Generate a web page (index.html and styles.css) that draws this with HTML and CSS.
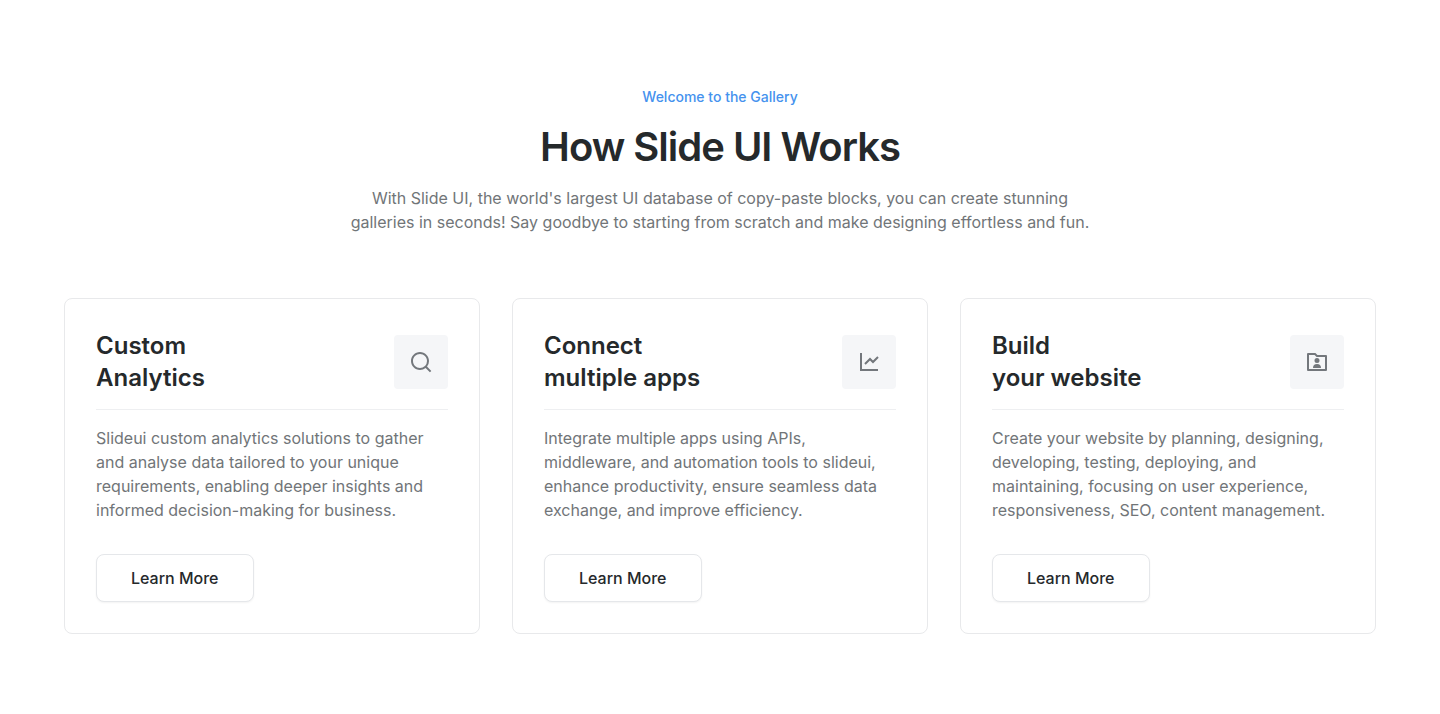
FILE: index.html
```
<!DOCTYPE html>
<html lang="en">
<head>
<meta charset="utf-8">
<meta name="viewport" content="width=device-width, initial-scale=1">
<title>How Slide UI Works</title>
<link rel="stylesheet" href="styles.css">
</head>
<body>
<main class="section">
  <header class="intro">
    <p class="eyebrow">Welcome to the Gallery</p>
    <h1 class="title">How Slide UI Works</h1>
    <p class="lead">With Slide UI, the world's largest UI database of copy-paste blocks, you can create stunning galleries in seconds! Say goodbye to starting from scratch and make designing effortless and fun.</p>
  </header>
  <div class="cards">
    <article class="card">
      <div class="card-head">
        <h2 class="card-title">Custom<br>Analytics</h2>
        <span class="tile"><svg class="icon" viewBox="0 0 24 24" aria-hidden="true"><path d="M18.031 16.617l4.283 4.283-1.415 1.414-4.282-4.283A8.96 8.96 0 0 1 11 20c-4.968 0-9-4.032-9-9s4.032-9 9-9 9 4.032 9 9a8.96 8.96 0 0 1-1.969 5.617zm-2.006-.742A6.98 6.98 0 0 0 18 11c0-3.868-3.133-7-7-7-3.868 0-7 3.132-7 7 0 3.867 3.132 7 7 7a6.98 6.98 0 0 0 4.875-1.975z"/></svg></span>
      </div>
      <p class="card-text">Slideui custom analytics solutions to gather and analyse data tailored to your unique requirements, enabling deeper insights and informed decision-making for business.</p>
      <button class="button" type="button">Learn More</button>
    </article>
    <article class="card">
      <div class="card-head">
        <h2 class="card-title">Connect<br>multiple apps</h2>
        <span class="tile"><svg class="icon" viewBox="0 0 24 24" aria-hidden="true"><path d="M5 3v16h16v2H3V3h2zm15.293 3.293l1.414 1.414L16 13.414l-3-2.999-4.293 4.292-1.414-1.414L13 7.586l3 2.999 4.293-4.292z"/></svg></span>
      </div>
      <p class="card-text">Integrate multiple apps using APIs, middleware, and automation tools to slideui, enhance productivity, ensure seamless data exchange, and improve efficiency.</p>
      <button class="button" type="button">Learn More</button>
    </article>
    <article class="card">
      <div class="card-head">
        <h2 class="card-title">Build<br>your website</h2>
        <span class="tile"><svg class="icon" viewBox="0 0 24 24" aria-hidden="true"><path d="M12.414 5H21a1 1 0 0 1 1 1v14a1 1 0 0 1-1 1H3a1 1 0 0 1-1-1V4a1 1 0 0 1 1-1h7.414l2 2zM4 5v14h16V7h-8.414l-2-2H4zm4 13a4 4 0 1 1 8 0H8zm4-5a2.5 2.5 0 1 1 0-5 2.5 2.5 0 0 1 0 5z"/></svg></span>
      </div>
      <p class="card-text">Create your website by planning, designing, developing, testing, deploying, and maintaining, focusing on user experience, responsiveness, SEO, content management.</p>
      <button class="button" type="button">Learn More</button>
    </article>
  </div>
</main>
</body>
</html>
```
FILE: styles.css
```
* { box-sizing: border-box; }
body { margin: 0; background: #fff; color: #25292b; font-family: Inter, "Liberation Sans", sans-serif; }
h1, h2, p { margin: 0; }
.section { max-width: 1440px; margin: 0 auto; padding: 87px 64px 80px; }
.intro { max-width: 752px; margin: 0 auto 64px; text-align: center; }
.eyebrow { color: #4592ee; font-size: 14px; font-weight: 500; line-height: 20px; }
.title { margin: 16px 0 15px; font-size: 40px; font-weight: 600; line-height: 48px; letter-spacing: -1px; }
.lead, .card-text { color: #717578; font-size: 16px; line-height: 24px; }
.cards { display: grid; grid-template-columns: repeat(3, minmax(0, 1fr)); gap: 32px; }
.card { padding: 31px; border: 1px solid #e8e9eb; border-radius: 8px; }
.card-head { display: flex; align-items: center; justify-content: space-between; margin-bottom: 16px; padding-bottom: 15px; border-bottom: 1px solid #eeeff1; }
.card-title { font-size: 24px; font-weight: 600; line-height: 32px; }
.tile { display: grid; place-items: center; width: 54px; height: 54px; border-radius: 4px; background: #f5f6f8; }
.icon { width: 24px; height: 24px; fill: #73777c; }
.button { height: 48px; margin-top: 32px; padding: 0 34px; border: 1px solid #e5e7ea; border-radius: 8px; background: #fff; box-shadow: 0 1px 2px #0000000d; color: inherit; font: 500 16px/24px Inter, "Liberation Sans", sans-serif; }
@media (max-width: 960px) { .cards { grid-template-columns: minmax(0, 1fr); } }
```
